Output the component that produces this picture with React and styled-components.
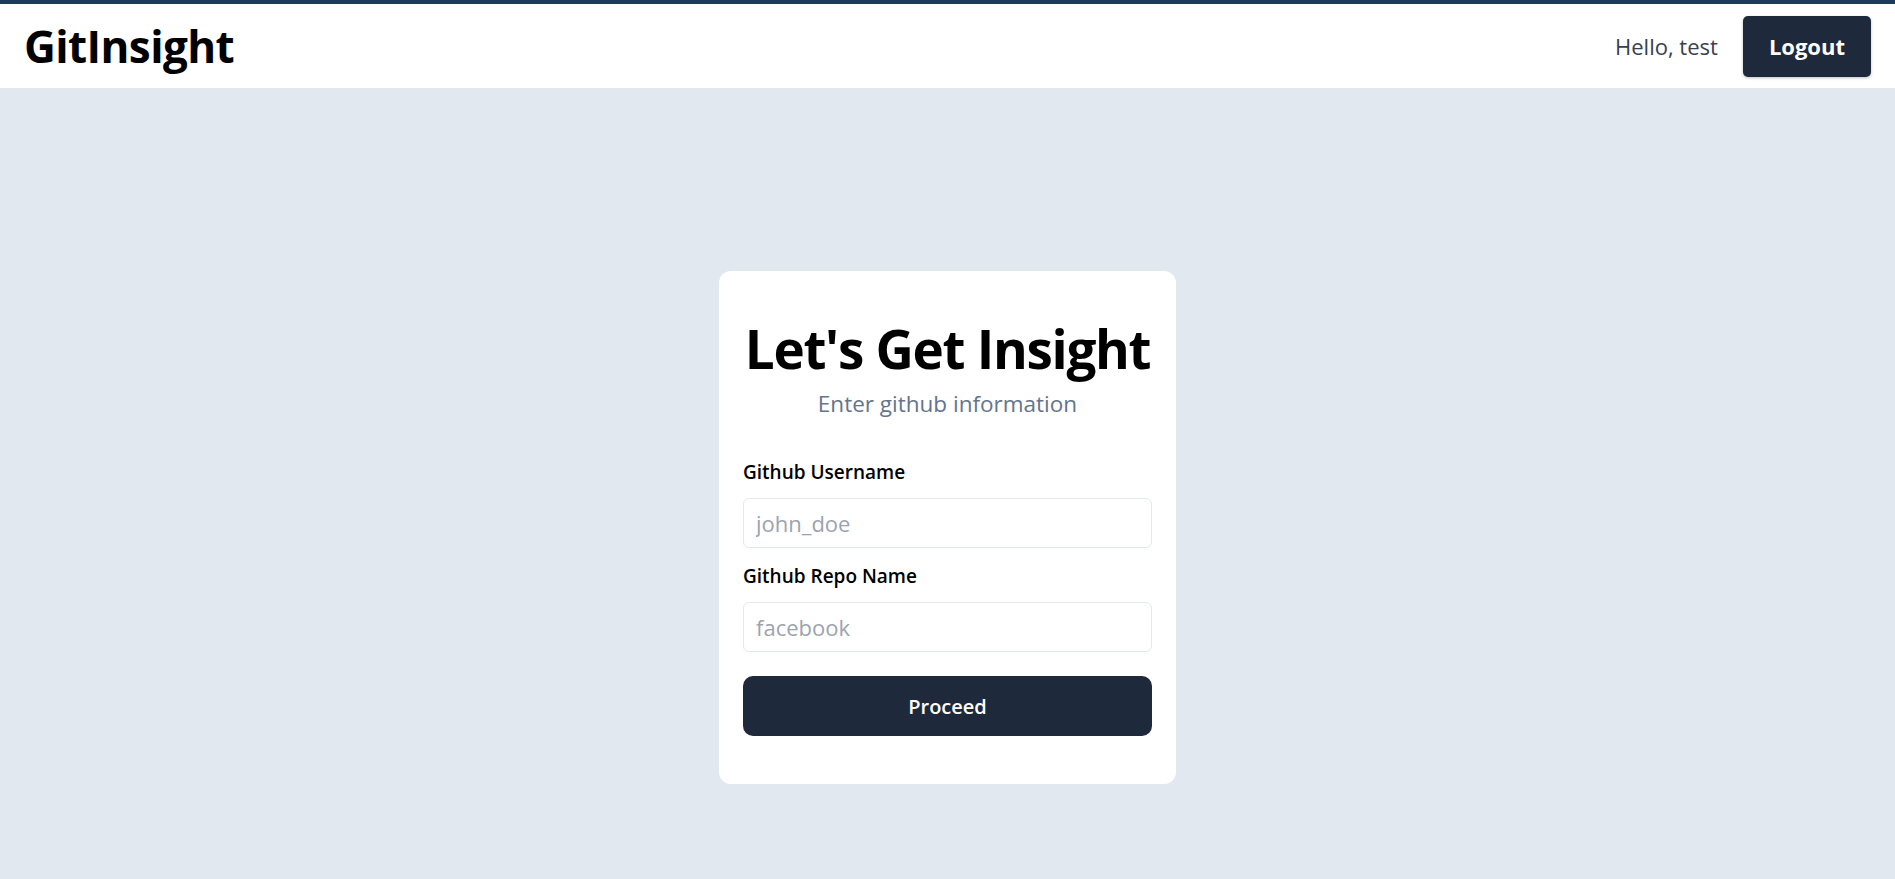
import React from "react";
import styled, { createGlobalStyle } from "styled-components";

const Global = createGlobalStyle`
  * { box-sizing: border-box; }
  body {
    margin: 0;
    font-family: "Open Sans", "Noto Sans", sans-serif;
    background: #e2e8f0;
  }
`;

const Header = styled.header`
  display: flex;
  align-items: center;
  justify-content: space-between;
  height: 88px;
  padding: 0 24px 0 24px;
  background: #ffffff;
  border-top: 4px solid #1e3a5f;
`;

const Brand = styled.h1`
  margin: 0;
  font-size: 44px;
  font-weight: 700;
  color: #000;
  letter-spacing: -0.6px;
`;

const UserArea = styled.div`
  display: flex;
  align-items: center;
  gap: 25px;
`;

const Greeting = styled.span`
  font-size: 22px;
  color: #374151;
`;

const DarkButton = styled.button`
  border: none;
  cursor: pointer;
  font-family: inherit;
  color: #fff;
  background: #1e293b;
  font-weight: ${(p) => (p.$bold ? 700 : 600)};
  font-size: ${(p) => p.$size}px;
  height: ${(p) => p.$h}px;
  width: ${(p) => p.$w || "auto"};
  padding: 0 ${(p) => p.$px}px;
  border-radius: ${(p) => p.$r}px;
  box-shadow: ${(p) => (p.$shadow ? "0 1px 3px rgba(0,0,0,0.25)" : "none")};
`;

const Main = styled.main`
  min-height: 100vh;
  display: flex;
  align-items: center;
  justify-content: center;
`;

const Card = styled.div`
  width: 457px;
  background: #fff;
  border-radius: 12px;
  padding: 48px 24px 48px;
`;

const Title = styled.h2`
  margin: 2px 0 0;
  text-align: center;
  font-size: 53px;
  line-height: 56px;
  font-weight: 700;
  color: #000;
  letter-spacing: -1.3px;
  white-space: nowrap;
`;

const Subtitle = styled.p`
  margin: 11px 0 0;
  text-align: center;
  font-size: 22.5px;
  line-height: 32px;
  color: #64748b;
`;

const Form = styled.form`
  display: flex;
  flex-direction: column;
  margin-top: 38px;
`;

const Label = styled.label`
  font-size: 19px;
  line-height: 28px;
  font-weight: 600;
  color: #000;
  margin-bottom: 12px;
`;

const Input = styled.input`
  height: 50px;
  padding: 0 12px;
  border: 1px solid #e2e8f0;
  border-radius: 6px;
  font-family: inherit;
  font-size: 22px;
  margin-bottom: ${(p) => p.$mb}px;
  outline: none;
  &::placeholder { color: #9ca3af; }
`;

export default function App() {
  return (
    <>
      <Global />
      <Header>
        <Brand>GitInsight</Brand>
        <UserArea>
          <Greeting>Hello, test</Greeting>
          <DarkButton $bold $size={22} $h={61} $px={26} $r={5} $shadow>
            Logout
          </DarkButton>
        </UserArea>
      </Header>
      <Main>
        <Card>
          <Title>Let's Get Insight</Title>
          <Subtitle>Enter github information</Subtitle>
          <Form onSubmit={(e) => e.preventDefault()}>
            <Label>Github Username</Label>
            <Input placeholder="john_doe" $mb={14} />
            <Label>Github Repo Name</Label>
            <Input placeholder="facebook" $mb={24} />
            <DarkButton type="submit" $size={20} $h={60} $px={0} $r={10} $w="100%">
              Proceed
            </DarkButton>
          </Form>
        </Card>
      </Main>
    </>
  );
}
